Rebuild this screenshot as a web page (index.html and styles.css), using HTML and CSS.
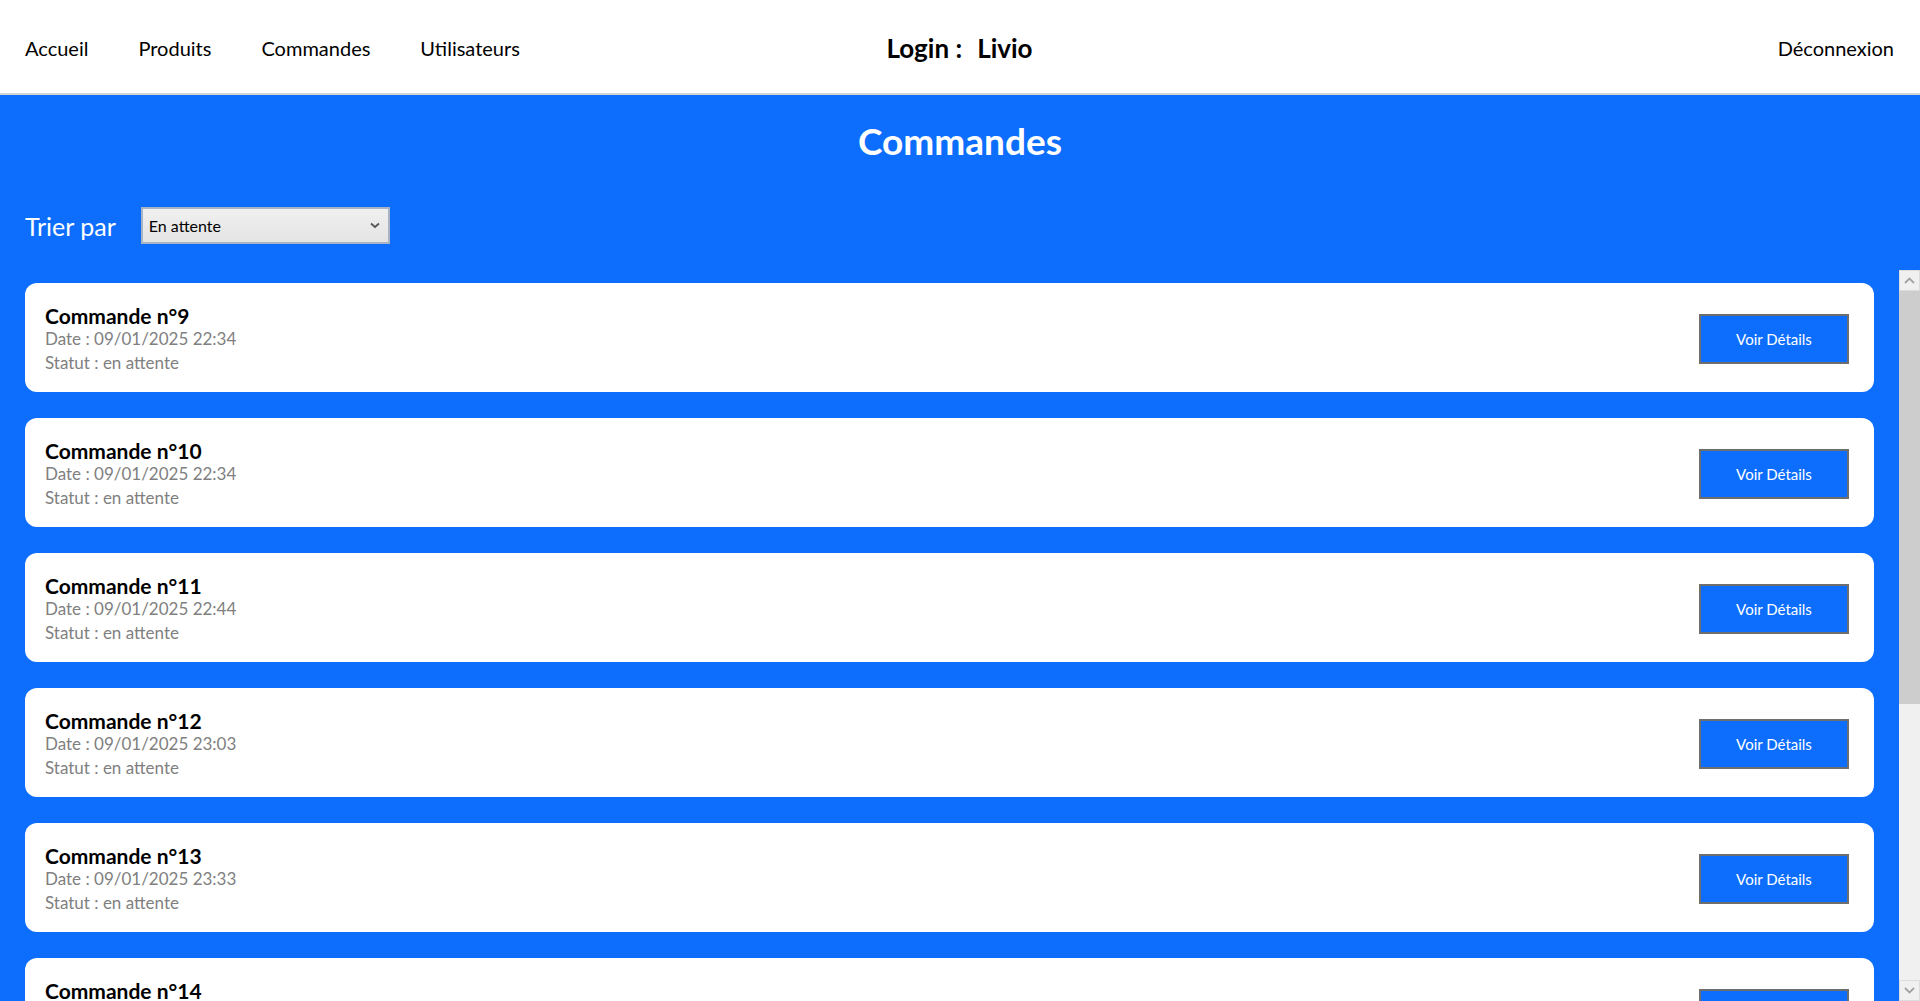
FILE: index.html
```html
<!DOCTYPE html>
<html lang="fr">
<head>
<meta charset="utf-8">
<title>Commandes</title>
<link rel="stylesheet" href="styles.css">
</head>
<body>
<header class="topbar">
  <nav class="nav">
    <a class="nav-link" href="#">Accueil</a>
    <a class="nav-link" href="#">Produits</a>
    <a class="nav-link" href="#">Commandes</a>
    <a class="nav-link" href="#">Utilisateurs</a>
  </nav>
  <div class="login">Login :<span class="login-name">Livio</span></div>
  <a class="logout" href="#">Déconnexion</a>
</header>
<main class="page">
  <h1 class="page-title">Commandes</h1>
  <div class="filter">
    <label class="filter-label" for="tri">Trier par</label>
    <select class="filter-select" id="tri">
      <option>En attente</option>
      <option>Validée</option>
      <option>Livrée</option>
    </select>
  </div>
  <div class="list-wrap">
    <section class="list">
      <article class="card">
        <div class="card-info">
          <div class="card-title">Commande n°9</div>
          <div class="card-meta">Date : 09/01/2025 22:34</div>
          <div class="card-meta">Statut : en attente</div>
        </div>
        <button class="btn">Voir Détails</button>
      </article>
      <article class="card">
        <div class="card-info">
          <div class="card-title">Commande n°10</div>
          <div class="card-meta">Date : 09/01/2025 22:34</div>
          <div class="card-meta">Statut : en attente</div>
        </div>
        <button class="btn">Voir Détails</button>
      </article>
      <article class="card">
        <div class="card-info">
          <div class="card-title">Commande n°11</div>
          <div class="card-meta">Date : 09/01/2025 22:44</div>
          <div class="card-meta">Statut : en attente</div>
        </div>
        <button class="btn">Voir Détails</button>
      </article>
      <article class="card">
        <div class="card-info">
          <div class="card-title">Commande n°12</div>
          <div class="card-meta">Date : 09/01/2025 23:03</div>
          <div class="card-meta">Statut : en attente</div>
        </div>
        <button class="btn">Voir Détails</button>
      </article>
      <article class="card">
        <div class="card-info">
          <div class="card-title">Commande n°13</div>
          <div class="card-meta">Date : 09/01/2025 23:33</div>
          <div class="card-meta">Statut : en attente</div>
        </div>
        <button class="btn">Voir Détails</button>
      </article>
      <article class="card">
        <div class="card-info">
          <div class="card-title">Commande n°14</div>
          <div class="card-meta">Date : 09/01/2025 23:41</div>
          <div class="card-meta">Statut : en attente</div>
        </div>
        <button class="btn">Voir Détails</button>
      </article>
      <article class="card">
        <div class="card-info">
          <div class="card-title">Commande n°15</div>
          <div class="card-meta">Date : 10/01/2025 09:12</div>
          <div class="card-meta">Statut : en attente</div>
        </div>
        <button class="btn">Voir Détails</button>
      </article>
      <article class="card">
        <div class="card-info">
          <div class="card-title">Commande n°16</div>
          <div class="card-meta">Date : 10/01/2025 10:27</div>
          <div class="card-meta">Statut : en attente</div>
        </div>
        <button class="btn">Voir Détails</button>
      </article>
      <article class="card">
        <div class="card-info">
          <div class="card-title">Commande n°17</div>
          <div class="card-meta">Date : 10/01/2025 11:05</div>
          <div class="card-meta">Statut : en attente</div>
        </div>
        <button class="btn">Voir Détails</button>
      </article>
    </section>
    <div class="scrollbar" aria-hidden="true">
      <div class="sb-btn">
        <svg width="11" height="7" viewBox="0 0 11 7"><path d="M1 6 L5.5 1.5 L10 6" fill="none" stroke="#a3a3a3" stroke-width="1.8"/></svg>
      </div>
      <div class="sb-thumb"></div>
      <div class="sb-track"></div>
      <div class="sb-btn">
        <svg width="11" height="7" viewBox="0 0 11 7"><path d="M1 1 L5.5 5.5 L10 1" fill="none" stroke="#a3a3a3" stroke-width="1.8"/></svg>
      </div>
    </div>
  </div>
</main>
</body>
</html>
```
FILE: styles.css
```css
* { box-sizing: border-box; }

html, body {
  margin: 0;
  height: 100%;
}

body {
  display: flex;
  flex-direction: column;
  overflow: hidden;
  font-family: Lato, "Liberation Sans", sans-serif;
  color: #000;
  background: #0d6efd;
}

.topbar {
  flex: 0 0 auto;
  height: 95px;
  background: #fff;
  border-bottom: 2px solid #d4d4d4;
  display: grid;
  grid-template-columns: 1fr auto 1fr;
  align-items: center;
  padding: 3px 26px 0 25px;
}

.nav {
  display: flex;
  gap: 50px;
}

.nav-link,
.logout {
  color: #000;
  text-decoration: none;
  font-size: 20px;
}

.logout {
  justify-self: end;
}

.login {
  font-size: 26px;
  font-weight: 700;
}

.login-name {
  margin-left: 15px;
}

.page {
  flex: 1 1 auto;
  min-height: 0;
  display: flex;
  flex-direction: column;
  background: #0d6efd;
  padding-top: 24px;
}

.page-title {
  margin: 0;
  text-align: center;
  color: #fff;
  font-size: 37px;
  line-height: 44px;
  font-weight: 700;
}

.filter {
  display: flex;
  align-items: center;
  gap: 25px;
  padding-left: 25px;
  margin-top: 44px;
  margin-bottom: 26px;
}

.filter-label {
  color: #fff;
  font-size: 25px;
  line-height: 30px;
}

.filter-select {
  appearance: none;
  -webkit-appearance: none;
  width: 249px;
  height: 37px;
  padding: 0 0 0 6px;
  border: 2px solid #a8b3c4;
  border-radius: 0;
  font-family: Lato, "Liberation Sans", sans-serif;
  font-size: 16px;
  color: #000;
  background-color: #ebebeb;
  background-image: url("data:image/svg+xml,%3Csvg xmlns='http://www.w3.org/2000/svg' width='10' height='7' viewBox='0 0 10 7'%3E%3Cpath d='M1 1.5 L5 5 L9 1.5' fill='none' stroke='%23555' stroke-width='1.8'/%3E%3C/svg%3E"), linear-gradient(#f0f0f0, #e4e4e4);
  background-repeat: no-repeat, no-repeat;
  background-position: right 8px center, 0 0;
  background-size: 10px 7px, 100% 100%;
}

.list-wrap {
  flex: 1 1 auto;
  min-height: 0;
  display: flex;
}

.list {
  flex: 1 1 auto;
  min-width: 0;
  overflow: hidden;
  padding-top: 12.5px;
}

.scrollbar {
  flex: 0 0 21px;
  display: flex;
  flex-direction: column;
  background: #f0f0f0;
}

.sb-btn {
  flex: 0 0 21px;
  display: flex;
  align-items: center;
  justify-content: center;
  background: #f0f0f0;
  border: 1px solid #dcdcdc;
}

.sb-thumb {
  flex: 0 0 413px;
  background: #cdcdcd;
}

.sb-track {
  flex: 1 1 auto;
}

.card {
  display: flex;
  align-items: center;
  justify-content: space-between;
  margin: 0 25px 25.5px 25px;
  padding: 21px 25px 18px 20px;
  background: #fff;
  border-radius: 12px;
}

.card-title {
  font-size: 21px;
  line-height: 23.5px;
  font-weight: 700;
  color: #000;
}

.card-meta {
  font-size: 17px;
  line-height: 23.5px;
  color: #808080;
}

.btn {
  width: 150px;
  height: 50px;
  background: #0d6efd;
  color: #fff;
  border: 2px solid #6e6e6e;
  border-radius: 0;
  font-family: Lato, "Liberation Sans", sans-serif;
  font-size: 15px;
  cursor: pointer;
}
```
